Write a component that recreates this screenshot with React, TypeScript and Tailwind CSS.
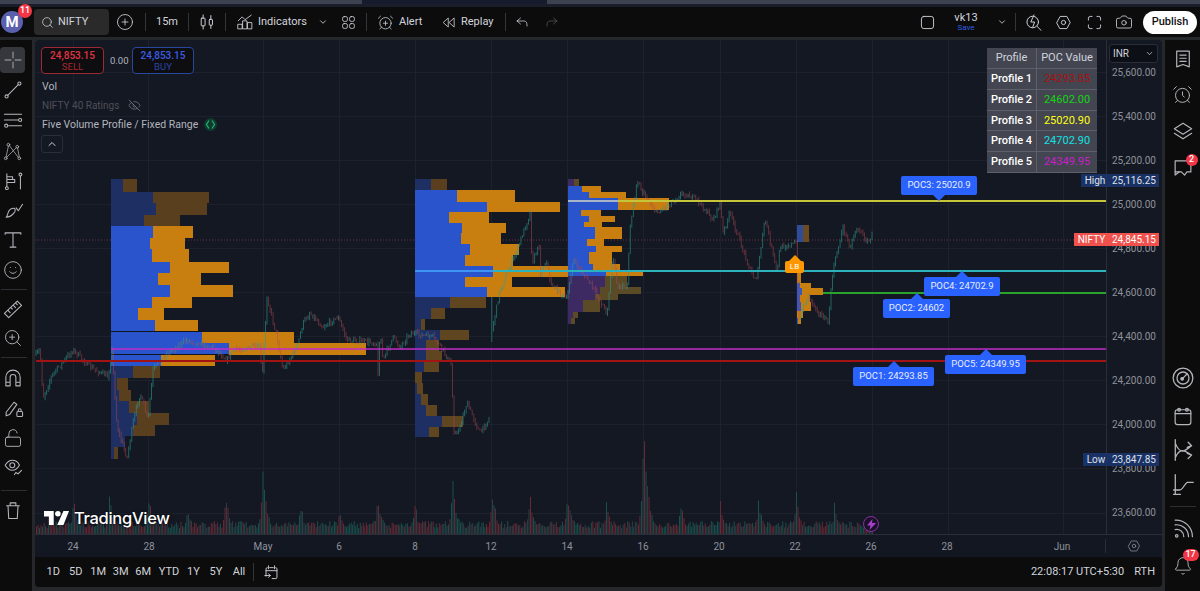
import type { ReactNode } from "react";
import { AlarmClock, AlarmClockPlus, Bell, Camera, ChevronDown, ChevronUp, CirclePlus, EyeOff, LockOpen, Search, Smile, ZoomIn } from "lucide-react";

// page coordinates are used in the chart svg (viewBox starts at 35,40)
type Row = [number, number, number, number];

const P1_DIM_A: Row[] = [[179,192,123,137],[192,203,153,209],[203,215,156,207],[215,226,144,180]];
const P1: Row[] = [[226,238,153,193],[238,249,150,185],[249,262,152,189],[262,273,170,229],[273,285,158,201],[285,297,170,233],[297,308,152,192],[308,320,138,164],[320,332,155,198],[332,343,202,294],[343,355,229,366],[355,366,161,215]];
const P1_DIM_B: Row[] = [[366,378,133,160],[378,390,117,128],[390,401,119,131],[401,413,129,149],[413,425,137,169],[425,436,133,155],[436,447,125,125],[447,459,114,118]];
const P2_DIM_A: Row[] = [[179,190,431,447]];
const P2: Row[] = [[190,202,457,515],[202,212,487,560],[212,223,449,489],[223,233,462,506],[233,244,461,501],[244,255,470,519],[255,266,465,513],[266,277,493,568],[277,287,465,512],[287,297,487,565]];
const P2_DIM_B: Row[] = [[297,308,450,486],[308,319,431,445],[319,330,421,425],[330,340,440,469],[340,351,426,439],[351,362,426,442],[362,372,424,439],[372,383,415,422],[383,394,417,423],[394,405,421,428],[405,416,426,437],[416,427,442,463],[427,437,429,439]];
const P3: Row[] = [[186,192,582,601],[192,198,589,626],[198,210,618,669],[210,216,581,601],[216,222,589,615],[222,227,584,602],[227,239,595,622],[239,246,587,604],[246,252,596,622],[252,264,589,612],[264,270,593,620],[270,276,606,643]];
const P3_DIM: Row[] = [[179,186,574,579],[276,287,605,627],[287,294,600,641],[294,300,595,618],[300,312,583,600],[312,318,573,578],[318,324,571,575]];
const P4: Row[] = [[273,283,797,801],[283,288,800,811],[288,295,802,823],[295,302,800,810],[302,311,801,811],[311,318,797,803],[318,324,798,801]];
const P4_DIM: Row[] = [[225,242,803,809]];

const WAY: [number, number][] = [[36,355],[40,350],[43,398],[52,375],[67,357],[73,350],[90,367],[108,377],[112,350],[117,427],[127,458],[133,423],[140,393],[148,420],[153,370],[167,353],[187,340],[213,347],[227,360],[233,350],[260,347],[262,380],[267,297],[277,337],[283,370],[297,347],[303,323],[310,313],[323,327],[338,317],[347,340],[377,343],[378,377],[380,330],[383,360],[393,337],[400,347],[410,333],[433,337],[443,350],[452,367],[453,430],[458,433],[467,403],[480,433],[490,417],[492,330],[500,290],[517,250],[530,213],[532,263],[540,243],[537,280],[547,260],[550,283],[567,300],[573,260],[590,283],[607,313],[613,253],[617,287],[627,287],[630,230],[637,180],[643,193],[657,213],[670,203],[683,193],[697,200],[713,220],[720,203],[723,233],[730,213],[743,250],[753,277],[757,277],[765,218],[777,273],[780,247],[797,243],[798,320],[808,295],[817,310],[828,323],[833,270],[843,227],[850,247],[857,227],[868,243],[872,235]];

const SPIKES: [number, number][] = [[73,495],[109,492],[148,490],[187,503],[225,490],[262,463],[300,500],[339,505],[377,488],[414,497],[452,473],[492,485],[529,488],[567,485],[606,500],[643,410],[680,497],[720,500],[758,495],[796,490],[834,497]];

let seed = 7;
const rnd = () => {
  seed = (seed * 16807) % 2147483647;
  return seed / 2147483647;
};

function priceAt(x: number) {
  for (let i = 1; i < WAY.length; i++) {
    if (x <= WAY[i][0]) {
      const [x0, y0] = WAY[i - 1];
      const [x1, y1] = WAY[i];
      return y0 + ((y1 - y0) * (x - x0)) / (x1 - x0 || 1);
    }
  }
  return WAY[WAY.length - 1][1];
}

function buildCandles() {
  let up = "M491.800 297V342";
  let down = "";
  let prev = priceAt(36);
  for (let x = 36; x < 872; x += 1.52) {
    if (x > 490 && x < 493) {
      prev = priceAt(x);
      continue;
    }
    const close = priceAt(x) + (rnd() - 0.5) * 5;
    const top = Math.min(prev, close);
    const bot = Math.max(prev, close);
    const d = `M${x.toFixed(1)} ${(top - rnd() * 3).toFixed(1)}V${(bot + rnd() * 3).toFixed(1)}`;
    if (close < prev) up += d;
    else down += d;
    prev = close;
  }
  return { up, down };
}

function buildVolume() {
  const bars: { x: number; h: number; c: string }[] = [];
  const colors = ["#652a35", "#1b504e", "#303c44"];
  for (let x = 36; x < 872; x += 1.52) {
    let h = 7 + rnd() * 7;
    for (const [sx, top] of SPIKES) {
      const dist = x - sx;
      const k = dist >= 0 ? Math.exp(-dist / 5) : Math.exp(dist / 2);
      h = Math.max(h, (535 - top) * k * (0.7 + rnd() * 0.3));
    }
    bars.push({ x, h, c: colors[Math.floor(rnd() * 2.4)] });
  }
  return bars;
}

const candles = buildCandles();
const volume = buildVolume();

const GRID_X = [73, 148, 263, 339, 415, 491, 567, 643, 720, 796, 872, 948, 1063];
const GRID_Y = [72, 116, 160, 204, 248, 292, 336, 380, 424, 468, 513];
const PRICES = ["25,600.00", "25,400.00", "25,200.00", "25,000.00", "24,800.00", "24,600.00", "24,400.00", "24,200.00", "24,000.00", "23,800.00", "23,600.00"];

function Profile({ base, rows, blue, orange }: { base: number; rows: Row[]; blue: string; orange: string }) {
  return (
    <>
      {rows.map(([y0, y1, mid, end], i) => (
        <g key={i}>
          <rect x={base} y={y0} width={Math.max(0, mid - base)} height={y1 - y0} fill={blue} />
          <rect x={mid} y={y0} width={end - mid} height={y1 - y0} fill={orange} />
        </g>
      ))}
    </>
  );
}

function ChartDrawing() {
  return (
    <svg className="block" width="1071" height="494" viewBox="35 40 1071 494">
      {GRID_X.map((x) => (
        <line key={x} x1={x + 0.5} x2={x + 0.5} y1={40} y2={534} stroke="#1d212d" />
      ))}
      {GRID_Y.map((y) => (
        <line key={y} y1={y + 0.5} y2={y + 0.5} x1={35} x2={1106} stroke="#1d212d" />
      ))}
      <g>
        {volume.map((b, i) => (
          <rect key={i} x={b.x} y={535 - b.h} width={1} height={b.h} fill={b.c} />
        ))}
      </g>
      <line x1={35} x2={1106} y1={240} y2={240} stroke="#6b3540" strokeDasharray="1 2" />
      <Profile base={111} rows={P1_DIM_A} blue="#1e2f63" orange="#5a3f1f" />
      <Profile base={111} rows={P1} blue="#2a54cb" orange="#c97f10" />
      <Profile base={111} rows={P1_DIM_B} blue="#1e2f63" orange="#5a3f1f" />
      <Profile base={415} rows={P2_DIM_A} blue="#1e2f63" orange="#5a3f1f" />
      <Profile base={415} rows={P2} blue="#2a54cb" orange="#c97f10" />
      <Profile base={415} rows={P2_DIM_B} blue="#1e2f63" orange="#5f4520" />
      <Profile base={568} rows={P3_DIM} blue="#3d2a63" orange="#5a4a26" />
      <Profile base={568} rows={P3} blue="#2a54cb" orange="#c97f10" />
      <Profile base={797} rows={P4_DIM} blue="#2f4c9a" orange="#6a4c20" />
      <Profile base={797} rows={P4} blue="#3158c4" orange="#c97f10" />
      <line x1={111} x2={202} y1={331.5} y2={331.5} stroke="#10141f" />
      <line x1={111} x2={229} y1={354.5} y2={354.5} stroke="#10141f" />
      <path d={candles.down} stroke="#b04a55" strokeOpacity={0.5} strokeWidth={1} fill="none" />
      <path d={candles.up} stroke="#2f9c90" strokeOpacity={0.58} strokeWidth={1} fill="none" />
      <line x1={36} x2={1106} y1={361} y2={361} stroke="#a31314" strokeWidth={2} />
      <line x1={111} x2={1106} y1={349} y2={349} stroke="#c22bc9" strokeWidth={1.5} />
      <line x1={415} x2={1106} y1={271} y2={271} stroke="#2ab3bc" strokeWidth={2} />
      <line x1={415} x2={493} y1={271} y2={271} stroke="#3d94f5" strokeWidth={2} />
      <line x1={568} x2={1106} y1={201} y2={201} stroke="#c6c53a" strokeWidth={2} />
      <line x1={568} x2={618} y1={201} y2={201} stroke="#a9b4c8" strokeWidth={2} />
      <line x1={823} x2={1106} y1={293} y2={293} stroke="#2aa32c" strokeWidth={2} />
    </svg>
  );
}

function Glyph({ size = 20, className = "", children }: { size?: number; className?: string; children: ReactNode }) {
  return (
    <svg width={size} height={size} viewBox="0 0 28 28" fill="none" stroke="currentColor" strokeWidth={1.5} strokeLinecap="round" strokeLinejoin="round" className={`shrink-0 ${className}`}>
      {children}
    </svg>
  );
}

function Sep() {
  return <div className="h-[18px] w-px shrink-0 bg-[#33353a]" />;
}

function LeftCell({ className = "h-[30px]", children }: { className?: string; children: ReactNode }) {
  return <div className={`flex w-full shrink-0 items-center justify-center ${className}`}>{children}</div>;
}

function LeftRule({ className }: { className: string }) {
  return <div className={`mx-[1px] h-px w-[26px] shrink-0 bg-[#2c2e33] ${className}`} />;
}

function LeftToolbar() {
  return (
    <aside className="flex h-full w-[32px] shrink-0 flex-col bg-[#0c0c0c] pt-[7px] text-[#b4b6bc]">
      <div className="flex h-[26px] w-[25px] shrink-0 items-center justify-center rounded-[4px] bg-[#35373c] text-[#85878c]">
        <Glyph size={20}><path d="M14 3v8M14 17v8M3 14h8M17 14h8" strokeWidth={2} /></Glyph>
      </div>
      <LeftCell className="mt-[2px] h-[30px] pr-[7px]">
        <Glyph><circle cx="5" cy="23" r="2.2" /><circle cx="23" cy="5" r="2.2" /><path d="M6.6 21.4 21.4 6.6" /></Glyph>
      </LeftCell>
      <LeftCell className="h-[30px] pr-[7px]">
        <Glyph><path d="M2 6h24M2 14h19M8 22h18" /><circle cx="24" cy="14" r="2.2" /><circle cx="4.500" cy="22" r="2.2" /></Glyph>
      </LeftCell>
      <LeftCell className="h-[32px] pr-[7px]">
        <Glyph size={19}><circle cx="8" cy="4" r="2" strokeWidth={1.2} /><circle cx="21" cy="7" r="2" strokeWidth={1.2} /><circle cx="4" cy="24" r="2" strokeWidth={1.2} /><circle cx="24" cy="24" r="2" strokeWidth={1.2} /><path d="M8 6 4.500 22M9.500 5.500 22.500 22.500M19.500 8.500 5.500 22.500M21.500 9l2.500 13" strokeWidth={1.1} /></Glyph>
      </LeftCell>
      <LeftCell className="h-[28px] pr-[5px]">
        <Glyph><circle cx="4" cy="24" r="2" /><path d="M4 22V4M4 8h8v4H4M4 12h11v4H4M4 16h6" /><circle cx="23" cy="5" r="2" /><path d="M23 7v18" /></Glyph>
      </LeftCell>
      <LeftCell className="h-[30px] pr-[5px]">
        <Glyph><path d="M3 24c2-1 2-6 4-9 2-3 6-4 8-3 1 1 1 4-1 6-3 4-7 6-11 6Z" /><path d="M17 11 20 15 26 6" /></Glyph>
      </LeftCell>
      <LeftCell className="h-[30px] pr-[7px]">
        <Glyph><path d="M3 6V4h22v2M14 4v20M10 24h8" /></Glyph>
      </LeftCell>
      <LeftCell className="h-[30px] pr-[7px]"><Smile size={20} strokeWidth={1.1} /></LeftCell>
      <LeftRule className="my-[4px]" />
      <LeftCell className="h-[30px] pr-[7px]">
        <Glyph><path d="M2 20 20 3l6 6L8 26Z" /><path d="m7 16 3 3M11 12l2 2M14.500 9l3 3M18 6l2 2" /></Glyph>
      </LeftCell>
      <LeftCell className="h-[28px] pr-[7px]"><ZoomIn size={20} strokeWidth={1.1} /></LeftCell>
      <LeftRule className="my-[5px]" />
      <LeftCell className="h-[30px] pr-[7px]">
        <Glyph><path d="M4 25V13a10 10 0 0 1 20 0v12h-6V13a4 4 0 0 0-8 0v12ZM4 20h6M18 20h6" /></Glyph>
      </LeftCell>
      <LeftCell className="h-[30px] pr-[5px]">
        <Glyph><path d="M3 20 14 6l4 3L8 23l-5 2Z" /><rect x="18" y="19" width="8" height="7" rx="1.5" /><path d="M20 19v-2a2 2 0 0 1 4 0v2" /></Glyph>
      </LeftCell>
      <LeftCell className="h-[30px] pr-[7px]"><LockOpen size={20} strokeWidth={1.1} /></LeftCell>
      <LeftCell className="h-[26px] pr-[6px]">
        <Glyph><path d="M3 13c3-5 7-7 10-7s8 2 10 7c-3 5-7 7-10 7s-7-2-10-7Z" /><circle cx="13" cy="13" r="3.500" /><path d="M16 26l2-3 3 2 5-5" /></Glyph>
      </LeftCell>
      <LeftRule className="mt-[11px] mb-[4px]" />
      <LeftCell className="h-[30px] pr-[7px]">
        <Glyph><path d="M5 8h18M10 8V4h8v4M7 8l1 18h12l1-18" /></Glyph>
      </LeftCell>
    </aside>
  );
}

function RightToolbar() {
  return (
    <aside className="flex h-full w-[35px] shrink-0 flex-col items-center bg-[#0c0c0c] pt-[5px] text-[#b4b6bc]">
      <div className="flex h-[28px] shrink-0 items-center">
        <Glyph size={22}><path d="M6 4h16v20l-8-3-8 3ZM10 9h8M10 13h8M10 17h8" /></Glyph>
      </div>
      <div className="mt-[7px] flex h-[28px] shrink-0 items-center"><AlarmClock size={21} strokeWidth={1.1} /></div>
      <div className="mt-[9px] flex h-[28px] shrink-0 items-center">
        <Glyph size={22}><path d="M14 4 25 11l-11 7L3 11ZM3 17l11 7 11-7" /></Glyph>
      </div>
      <div className="relative mt-[9px] flex h-[28px] shrink-0 items-center">
        <Glyph size={22}><path d="M4 5h20v14h-5l-3 4-4-4H4Z" /><path d="M9 19 4 23v-4" /></Glyph>
        <span className="absolute -right-[4px] top-0 flex size-[12px] items-center justify-center rounded-full bg-[#f23645] text-[9px] font-medium text-white">2</span>
      </div>
      <div className="mt-[181px] flex h-[30px] shrink-0 items-center">
        <Glyph size={24}><circle cx="14" cy="14" r="11.500" /><circle cx="14" cy="14" r="7" /><circle cx="13" cy="15" r="1.500" fill="currentColor" /><path d="M13 15 19 9" /></Glyph>
      </div>
      <div className="mt-[8px] flex h-[30px] shrink-0 items-center">
        <Glyph size={22}><rect x="4" y="6" width="20" height="19" rx="3" /><path d="M4 11h20" /><circle cx="9" cy="6" r="1.800" /><circle cx="19" cy="6" r="1.800" /></Glyph>
      </div>
      <div className="mt-[4px] flex h-[30px] shrink-0 items-center">
        <Glyph size={24}><path d="M5 2v24M5 6c3 8 6 10 10 9 3-1 6-4 9-6M5 23c3-7 6-9 10-8 3 1 6 3 9 5M20 5l4 4-5 2M20 24l4-4-5-2" /></Glyph>
      </div>
      <div className="mt-[4px] flex h-[30px] shrink-0 items-center">
        <Glyph size={24}><path d="M5 3v23M3 21h7c4 0 6-8 9-9h7M3 26h8" /></Glyph>
      </div>
      <div className="mt-[7px] h-px w-[26px] shrink-0 bg-[#2c2e33]" />
      <div className="mt-[7px] flex h-[28px] shrink-0 items-center">
        <Glyph size={22}><circle cx="6" cy="24" r="1.600" /><path d="M4 16a9 9 0 0 1 11 9M4 10a15 15 0 0 1 17 15M4 4a21 21 0 0 1 22 21" /></Glyph>
      </div>
      <div className="relative mt-[10px] flex h-[28px] shrink-0 items-center">
        <Bell size={20} strokeWidth={1.1} />
        <span className="absolute -right-[6px] -top-[3px] flex h-[12px] w-[16px] items-center justify-center rounded-full bg-[#f23645] text-[9px] font-medium text-white">17</span>
      </div>
    </aside>
  );
}

function TopBar() {
  return (
    <header className="flex h-[30px] shrink-0 items-center bg-[#0c0c0c] pr-[3px] text-[11px] text-[#d1d4dc]">
      <div className="relative ml-[1px] flex size-[22px] shrink-0 items-center justify-center rounded-full bg-[#5a5fae] text-[15px] font-bold text-white">
        M
        <span className="absolute -right-[9px] -top-[7px] flex size-[14px] items-center justify-center rounded-full bg-[#f23645] text-[9px] font-medium">11</span>
      </div>
      <div className="ml-[11px] flex h-[26px] w-[75px] shrink-0 items-center rounded-[4px] bg-[#2a2a2a] pl-[7px]">
        <Search size={13} strokeWidth={1.4} />
        <span className="ml-[4px]">NIFTY</span>
      </div>
      <CirclePlus size={18} strokeWidth={1.1} className="ml-[7px] shrink-0" />
      <div className="ml-[11px]"><Sep /></div>
      <span className="ml-[10px] w-[21px] shrink-0">15m</span>
      <div className="ml-[11px]"><Sep /></div>
      <Glyph size={18} className="ml-[9px]"><rect x="5" y="8" width="6" height="12" rx="1" /><path d="M8 3v5M8 20v5M20 4v6M20 19v5" /><rect x="17.500" y="10" width="5" height="9" rx="1" /></Glyph>
      <div className="ml-[9px]"><Sep /></div>
      <Glyph size={16} className="ml-[11px]"><rect x="2" y="18" width="7" height="8" /><rect x="10.500" y="12" width="7" height="14" /><rect x="19" y="15" width="7" height="11" /><path d="M2 12 9 5l5 5 11-8" /></Glyph>
      <span className="ml-[5px] w-[49px] shrink-0">Indicators</span>
      <ChevronDown size={10} className="ml-[11px] shrink-0" />
      <Glyph size={15} className="ml-[13px]"><rect x="3" y="3" width="9" height="9" rx="3" /><rect x="16" y="3" width="9" height="9" rx="3" /><rect x="3" y="16" width="9" height="9" rx="3" /><rect x="16" y="16" width="9" height="9" rx="3" /></Glyph>
      <div className="ml-[10px]"><Sep /></div>
      <AlarmClockPlus size={17} strokeWidth={1.1} className="ml-[10px] shrink-0" />
      <span className="ml-[5px] w-[25px] shrink-0">Alert</span>
      <Glyph size={15} className="ml-[17px]"><path d="M13 6 4 14l9 8ZM24 6l-9 8 9 8Z" /></Glyph>
      <span className="ml-[5px] w-[33px] shrink-0">Replay</span>
      <div className="ml-[11px]"><Sep /></div>
      <Glyph size={14} className="ml-[9px]"><path d="M11 6 4 12l7 6M4 12h14c4 0 6 3 6 8v2" /></Glyph>
      <Glyph size={14} className="ml-[16px] text-[#55575c]"><path d="M17 6l7 6-7 6M24 12H10c-4 0-6 3-6 8v2" /></Glyph>

      <Glyph size={17} className="ml-auto"><rect x="4" y="4" width="20" height="20" rx="4" /></Glyph>
      <div className="ml-[10px] flex w-[40px] shrink-0 flex-col items-center leading-none">
        <span className="text-[11px]">vk13</span>
        <span className="mt-[1px] text-[8px] text-[#2f5de0]">Save</span>
      </div>
      <ChevronDown size={10} className="ml-[11px] shrink-0" />
      <div className="ml-[8px]"><Sep /></div>
      <Glyph size={18} className="ml-[9px]"><circle cx="12" cy="14" r="9" /><path d="m19 21 6 6M14 3l-5 11h6l-3 8" /></Glyph>
      <Glyph size={17} className="ml-[12px]"><path d="M3 14 8.500 4h11L25 14l-5.500 10h-11Z" /><circle cx="14" cy="14" r="3.500" /></Glyph>
      <Glyph size={17} className="ml-[14px]"><path d="M4 10V7a3 3 0 0 1 3-3h3M18 4h3a3 3 0 0 1 3 3v3M24 18v3a3 3 0 0 1-3 3h-3M10 24H7a3 3 0 0 1-3-3v-3" /></Glyph>
      <Camera size={18} strokeWidth={1.1} className="ml-[12px] shrink-0" />
      <button className="ml-[10px] flex h-[23px] w-[54px] shrink-0 items-center justify-center rounded-full bg-white text-[11px] font-medium text-[#111]">Publish</button>
    </header>
  );
}

function Legend() {
  return (
    <div className="absolute left-[6px] top-[7px] text-[10.500px] leading-[19px] text-[#b2b5be]">
      <div className="flex h-[27px] items-center">
        <div className="flex h-[27px] w-[63px] flex-col items-center justify-center rounded-[4px] border border-[#9c2a36] bg-[#0e0e10] leading-[11px]">
          <span className="text-[10px] font-medium text-[#e23344]">24,853.15</span>
          <span className="text-[9.500px] text-[#a8262f]">SELL</span>
        </div>
        <span className="ml-[6px] w-[22px] text-[9.500px] text-[#b2b5be]">0.00</span>
        <div className="flex h-[27px] w-[62px] flex-col items-center justify-center rounded-[4px] border border-[#2848a0] bg-[#0e0e10] leading-[11px]">
          <span className="text-[10px] font-medium text-[#3a5ce4]">24,853.15</span>
          <span className="text-[9.500px] text-[#2a45a8]">BUY</span>
        </div>
      </div>
      <div className="mt-[3px] h-[19px] pl-[1px]">Vol</div>
      <div className="flex h-[19px] items-center pl-[1px] text-[10px] text-[#4c4f59]">
        NIFTY 40 Ratings
        <EyeOff size={13} strokeWidth={1.2} className="ml-[9px] text-[#8a8d96]" />
      </div>
      <div className="flex h-[19px] items-center pl-[1px]">
        Five Volume Profile / Fixed Range
        <span className="ml-[6px] flex size-[13px] items-center justify-center rounded-full bg-[#0e3b2b]">
          <svg width="11" height="11" viewBox="0 0 11 11" fill="none" stroke="#22ab74" strokeWidth={1.3}><path d="M4 1.500 1.500 5.500 4 9.500M7 1.500l2.500 4L7 9.500" /></svg>
        </span>
      </div>
      <div className="mt-[1px] flex h-[18px] w-[22px] items-center justify-center rounded-[3px] border border-[#2a2e39]">
        <ChevronUp size={12} className="text-[#d1d4dc]" />
      </div>
    </div>
  );
}

function PocTable() {
  const rows = [
    ["Profile 1", "24293.85", "text-[#a81010]"],
    ["Profile 2", "24602.00", "text-[#14d414]"],
    ["Profile 3", "25020.90", "text-[#ffff14]"],
    ["Profile 4", "24702.90", "text-[#14e0e0]"],
    ["Profile 5", "24349.95", "text-[#c81ec8]"],
  ];
  return (
    <div className="absolute left-[952px] top-[8px] grid w-[110px] grid-cols-[50px_60px] bg-[#434651] text-center text-[11px] leading-[20px]">
      <div className="h-[21px] border-b border-r border-[#5d606b] text-[#d1d4dc]">Profile</div>
      <div className="h-[21px] border-b border-[#5d606b] text-[#d1d4dc]">POC Value</div>
      {rows.map(([name, value, color]) => (
        <div key={name} className="contents">
          <div className="h-[20.800px] border-b border-r border-[#5d606b] font-medium text-white">{name}</div>
          <div className={`h-[20.800px] border-b border-[#5d606b] ${color}`}>{value}</div>
        </div>
      ))}
    </div>
  );
}

function Poc({ className, text, down }: { className: string; text: string; down?: boolean }) {
  return (
    <div className={`absolute flex h-[19px] items-center justify-center rounded-[2px] bg-[#2962ff] text-[9.500px] text-[#e8ecf8] ${className}`}>
      {text}
      {down ? (
        <span className="absolute -bottom-[6px] left-1/2 -translate-x-1/2 border-x-[6px] border-t-[6px] border-x-transparent border-t-[#2962ff]" />
      ) : (
        <span className="absolute -top-[6px] left-1/2 -translate-x-1/2 border-x-[6px] border-b-[6px] border-x-transparent border-b-[#2962ff]" />
      )}
    </div>
  );
}

function AxisTag({ className, bg, label, value }: { className: string; bg: string; label: string; value: string }) {
  return (
    <div className={`absolute flex h-[13px] items-center text-[10px] leading-none text-[#dfe2ea] ${bg} ${className}`}>
      <span className="flex-1 pl-[3px] text-center">{label}</span>
      <span className="w-[53px] shrink-0 pl-[6px]">{value}</span>
    </div>
  );
}

function TimeAxis() {
  const cell = "w-[76px] shrink-0 text-center";
  return (
    <div className="flex h-[23px] shrink-0 items-center border-t border-[#2a2e39] bg-[#131722] text-[10px] text-[#8f929b]">
      <span className={cell}>24</span>
      <span className={cell}>28</span>
      <span className="w-[38px] shrink-0" />
      <span className={cell}>May</span>
      <span className={cell}>6</span>
      <span className={cell}>8</span>
      <span className={cell}>12</span>
      <span className={cell}>14</span>
      <span className={cell}>16</span>
      <span className={cell}>20</span>
      <span className={cell}>22</span>
      <span className={cell}>26</span>
      <span className={cell}>28</span>
      <span className="w-[39px] shrink-0" />
      <span className={cell}>Jun</span>
      <span className="w-[5px] shrink-0" />
      <span className="flex w-[56px] shrink-0 justify-center border-l border-[#2a2e39]">
        <Glyph size={14}><path d="M3 14 8.500 4h11L25 14l-5.500 10h-11Z" /><circle cx="14" cy="14" r="3.500" /></Glyph>
      </span>
    </div>
  );
}

function BottomBar() {
  const ranges = [
    ["1D", "w-[22.500px]"],
    ["5D", "w-[22.500px]"],
    ["1M", "w-[22.500px]"],
    ["3M", "w-[22.500px]"],
    ["6M", "w-[22.500px]"],
    ["YTD", "w-[29px]"],
    ["1Y", "w-[20px]"],
    ["5Y", "w-[25px]"],
    ["All", "w-[21px]"],
  ];
  return (
    <footer className="flex h-[30px] shrink-0 items-center rounded-b-[4px] bg-[#0c0c0c] pl-[7px] pr-[7px] text-[11px] text-[#d1d4dc]">
      {ranges.map(([r, w]) => (
        <span key={r} className={`shrink-0 text-center ${w}`}>{r}</span>
      ))}
      <div className="ml-[3px]"><Sep /></div>
      <Glyph size={17} className="ml-[9px]"><path d="M11 6h6M5 11h18M9 3v5M19 3v5M5 20V8a2 2 0 0 1 2-2M21 6a2 2 0 0 1 2 2v14a2 2 0 0 1-2 2h-6M3 19h9M9 16l3 3-3 3" /></Glyph>
      <span className="ml-auto">22:08:17 UTC+5:30</span>
      <span className="ml-[10px]">RTH</span>
    </footer>
  );
}

export default function App() {
  return (
    <div className="flex h-[591px] w-[1200px] flex-col overflow-hidden bg-[#26272b] [font-family:Roboto,sans-serif]">
      <div className="flex h-[4px] shrink-0 bg-[#3d4150]">
        <div className="ml-[362px] h-full w-[185px] bg-[#161b2e]" />
      </div>
      <div className="h-[3px] shrink-0 bg-[#1a1e2b]" />
      <TopBar />
      <div className="flex min-h-0 flex-1 gap-[3px] pt-[3px]">
        <LeftToolbar />
        <div className="flex w-[1127px] shrink-0 flex-col pb-[4px]">
          <div className="relative flex h-[494px] shrink-0 overflow-hidden rounded-t-[4px] bg-[#141822]">
            <div className="w-[1071px] shrink-0"><ChartDrawing /></div>
            <div className="flex w-[56px] shrink-0 flex-col border-l border-[#2a2e39] pl-[5px] pt-[10px] text-[10px] text-[#8f929b]">
              {PRICES.map((p) => (
                <div key={p} className="flex h-[44.100px] shrink-0 items-center">{p}</div>
              ))}
            </div>
            <Legend />
            <PocTable />
            <div className="absolute left-[1074px] top-[4px] flex h-[19px] w-[49px] items-center justify-between rounded-[3px] border border-[#2a2e39] bg-[#0d0f16] px-[3px] text-[10px] text-[#d1d4dc]">
              INR
              <ChevronDown size={9} />
            </div>
            <AxisTag className="left-[1046px] top-[134px] w-[78px]" bg="bg-[#1a3166]" label="High" value="25,116.25" />
            <AxisTag className="left-[1039px] top-[193px] w-[85px] text-white" bg="bg-[#f0514d]" label="NIFTY" value="24,845.15" />
            <AxisTag className="left-[1048px] top-[413px] w-[76px]" bg="bg-[#1a3166]" label="Low" value="23,847.85" />
            <Poc className="left-[866px] top-[136px] w-[76px]" text="POC3: 25020.9" down />
            <Poc className="left-[889px] top-[237px] w-[76px]" text="POC4: 24702.9" />
            <Poc className="left-[848px] top-[259px] w-[67px]" text="POC2: 24602" />
            <Poc className="left-[910px] top-[315px] w-[81px]" text="POC5: 24349.95" />
            <Poc className="left-[818px] top-[327px] w-[81px]" text="POC1: 24293.85" />
            <div className="absolute left-[750px] top-[221px] flex h-[12px] w-[19px] items-center justify-center rounded-[2px] bg-[#ff9800] text-[8px] text-white">
              LB
              <span className="absolute -top-[6px] left-1/2 -translate-x-1/2 border-x-[6px] border-b-[6px] border-x-transparent border-b-[#ff9800]" />
            </div>
            <div className="absolute left-[9px] top-[470px] flex items-center text-white [text-shadow:0_0_3px_#000]">
              <svg width="25" height="14" viewBox="0 0 36 20" fill="currentColor" className="shrink-0">
                <path d="M14 20H7V8H0V0h14v20Z" />
                <circle cx="20" cy="4" r="4" />
                <path d="M28 0h8l-8 20h-9l9-20Z" />
              </svg>
              <span className="ml-[5px] text-[16.500px] font-medium leading-none tracking-[-0.3px] [font-family:Inter,sans-serif]">TradingView</span>
            </div>
            <div className="absolute left-[828px] top-[476px] flex size-[16px] items-center justify-center rounded-full border border-[#8a2fa8] bg-[#1a1228] text-[#a83fd0]">
              <svg width="9" height="11" viewBox="0 0 9 11" fill="currentColor"><path d="M5.500 0 0 6.500h3.500L2.500 11 9 4H5Z" /></svg>
            </div>
          </div>
          <TimeAxis />
          <BottomBar />
        </div>
        <RightToolbar />
      </div>
    </div>
  );
}
